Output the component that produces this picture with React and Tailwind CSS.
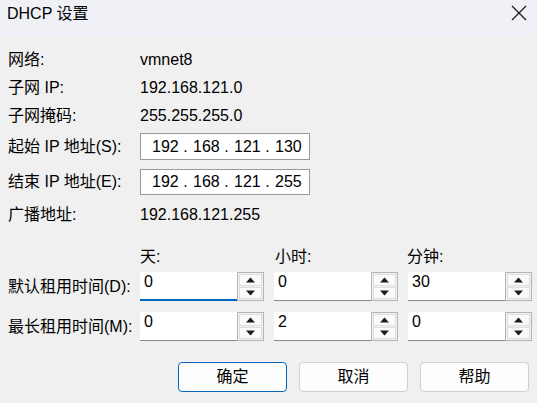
import React from "react";

const font = { fontFamily: '"Liberation Sans", "Noto Sans CJK SC", sans-serif' };

const Arrow = ({ up }) => (
    <svg width="9" height="6" viewBox="0 0 9 6">
        {up ? <polygon points="0,5.5 4.5,0.5 9,5.5" fill="#1b1b1b" /> : <polygon points="0,0.5 9,0.5 4.5,5.5" fill="#1b1b1b" />}
    </svg>
);

const Spin = ({ value, focused }) => (
    <div className="flex h-[29px] w-[124px]">
        <div
            className={
                "flex-1 bg-white flex items-start pl-[4px] pt-[2px] text-[16px] " +
                (focused ? "border-b-2 border-[#0067c0]" : "border-b border-[#8c8c8c]")
            }
        >
            {value}
        </div>
        <div className="w-[27px] border border-[#b4b4b4] p-[1px] flex flex-col gap-[1px]">
            <div className="flex-1 border border-[#dedede] bg-[#fafafa] flex items-center justify-center">
                <Arrow up />
            </div>
            <div className="flex-1 border border-[#dedede] bg-[#fafafa] flex items-center justify-center">
                <Arrow />
            </div>
        </div>
    </div>
);

const IpField = ({ parts }) => (
    <div className="w-[170px] h-full bg-white border border-[#9a9a9a] flex items-center pl-[11px] text-[16px]">
        {parts.map((p, i) => (
            <React.Fragment key={i}>
                {i > 0 && <span className="w-[15px] text-center">.</span>}
                <span className="w-[26px]">{p}</span>
            </React.Fragment>
        ))}
    </div>
);

const Row = ({ label, children, className }) => (
    <div className={"flex items-center " + className}>
        <div className="w-[132px]">{label}</div>
        {children}
    </div>
);

export default function App() {
    return (
        <div style={font} className="w-[537px] h-[403px] bg-[#f0f0f0] text-[16px] leading-none text-black overflow-hidden">
            {/* title bar */}
            <div className="h-[35px] bg-[#eff1f7] flex items-start justify-between">
                <div className="pl-[7px] pt-[6px] text-[16px]">DHCP 设置</div>
                <svg className="mr-[10px] mt-[5px]" width="16" height="16" viewBox="0 0 16 16">
                    <path d="M1 1 L15 15 M15 1 L1 15" stroke="#1b1b1b" strokeWidth="1.3" />
                </svg>
            </div>

            <div className="pl-[8px] pt-[11px]">
                <Row label="网络:" className="h-[28px]">vmnet8</Row>
                <Row label="子网 IP:" className="h-[28px]">192.168.121.0</Row>
                <Row label="子网掩码:" className="h-[28px]">255.255.255.0</Row>
                <Row label="起始 IP 地址(S):" className="h-[27px] mt-[3px]">
                    <IpField parts={["192", "168", "121", "130"]} />
                </Row>
                <Row label="结束 IP 地址(E):" className="h-[26px] mt-[9px]">
                    <IpField parts={["192", "168", "121", "255"]} />
                </Row>
                <Row label="广播地址:" className="h-[28px] mt-[6px]">192.168.121.255</Row>

                <div className="flex items-center h-[20px] mt-[18px] pl-[132px]">
                    <div className="w-[134px]">天:</div>
                    <div className="w-[133px] pl-[1px]">小时:</div>
                    <div>分钟:</div>
                </div>

                <Row label="默认租用时间(D):" className="mt-[5px]">
                    <div className="flex gap-[10px]">
                        <Spin value="0" focused />
                        <Spin value="0" />
                        <Spin value="30" />
                    </div>
                </Row>
                <Row label="最长租用时间(M):" className="mt-[11px]">
                    <div className="flex gap-[10px]">
                        <Spin value="0" />
                        <Spin value="2" />
                        <Spin value="0" />
                    </div>
                </Row>

                <div className="flex justify-end gap-[12px] pr-[8px] mt-[21px]">
                    <button className="w-[109px] h-[30px] rounded-[4px] bg-[#fdfdfd] border border-[#0067c0] text-[16px]">确定</button>
                    <button className="w-[109px] h-[30px] rounded-[4px] bg-[#fdfdfd] border border-[#d0d0d0] text-[16px]">取消</button>
                    <button className="w-[109px] h-[30px] rounded-[4px] bg-[#fdfdfd] border border-[#d0d0d0] text-[16px]">帮助</button>
                </div>
            </div>
        </div>
    );
}
